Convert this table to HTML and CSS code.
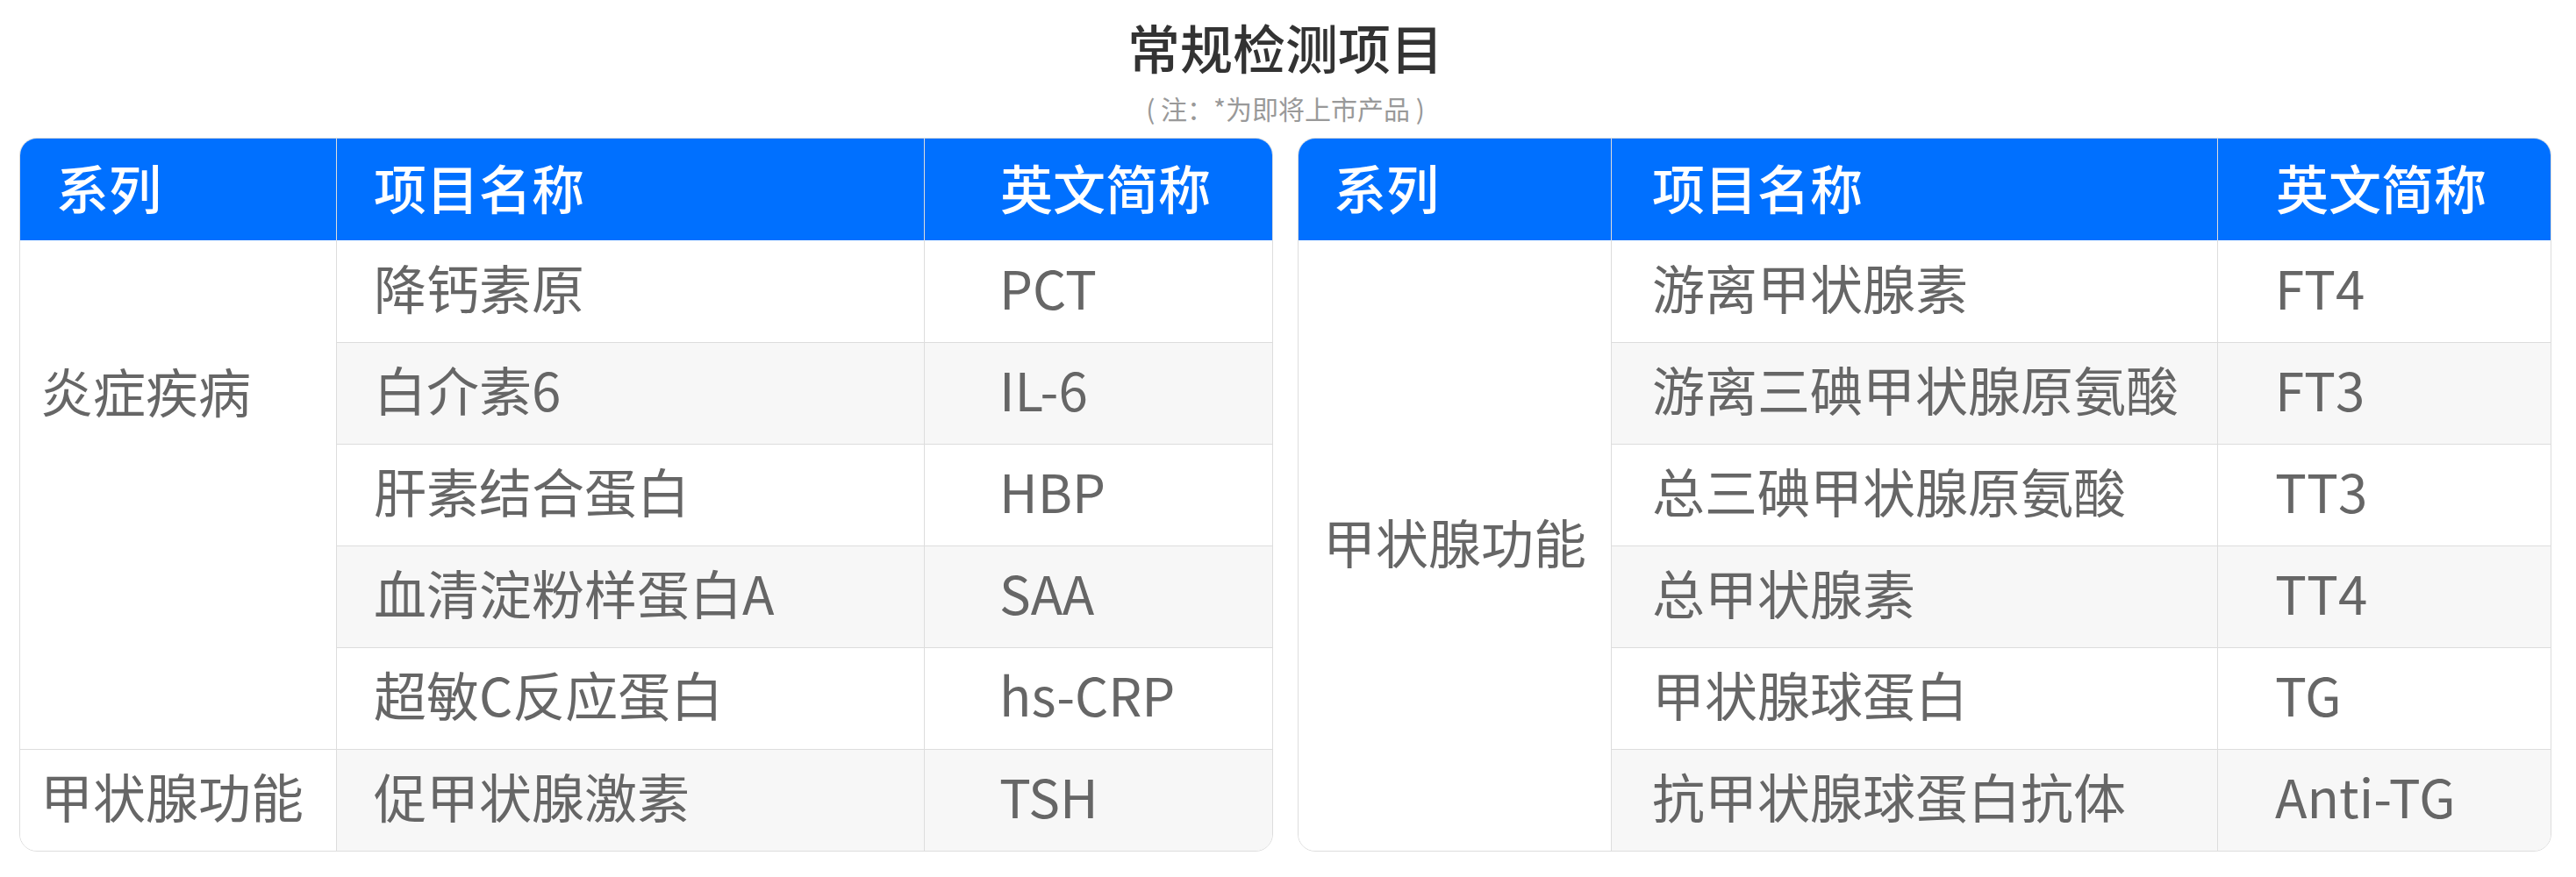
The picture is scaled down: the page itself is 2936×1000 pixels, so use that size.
FILE: index.html
```html
<!DOCTYPE html>
<html lang="zh-CN">
<head>
    <meta charset="UTF-8">
    <meta name="viewport" content="width=device-width, initial-scale=1.0">
    <title>常规检测项目</title>
    <link rel="stylesheet" href="styles.css">
</head>
<body>
    <div class="page">
        <h1 class="title">常规检测项目</h1>
        <p class="note">( 注：*为即将上市产品 )</p>
        <div class="tables">
            <div class="table-box box-a">
                <table>
                    <thead>
                        <tr>
                            <th class="series">系列</th>
                            <th class="name">项目名称</th>
                            <th class="abbr">英文简称</th>
                        </tr>
                    </thead>
                    <tbody>
                        <tr>
                            <td class="series group" rowspan="5">炎症疾病</td>
                            <td class="name">降钙素原</td>
                            <td class="abbr">PCT</td>
                        </tr>
                        <tr class="alt">
                            <td class="name">白介素6</td>
                            <td class="abbr">IL-6</td>
                        </tr>
                        <tr>
                            <td class="name">肝素结合蛋白</td>
                            <td class="abbr">HBP</td>
                        </tr>
                        <tr class="alt">
                            <td class="name">血清淀粉样蛋白A</td>
                            <td class="abbr">SAA</td>
                        </tr>
                        <tr>
                            <td class="name">超敏C反应蛋白</td>
                            <td class="abbr">hs-CRP</td>
                        </tr>
                        <tr class="alt">
                            <td class="series">甲状腺功能</td>
                            <td class="name">促甲状腺激素</td>
                            <td class="abbr">TSH</td>
                        </tr>
                    </tbody>
                </table>
            </div>
            <div class="table-box box-b">
                <table>
                    <thead>
                        <tr>
                            <th class="series">系列</th>
                            <th class="name">项目名称</th>
                            <th class="abbr">英文简称</th>
                        </tr>
                    </thead>
                    <tbody>
                        <tr>
                            <td class="series center" rowspan="6">甲状腺功能</td>
                            <td class="name">游离甲状腺素</td>
                            <td class="abbr">FT4</td>
                        </tr>
                        <tr class="alt">
                            <td class="name">游离三碘甲状腺原氨酸</td>
                            <td class="abbr">FT3</td>
                        </tr>
                        <tr>
                            <td class="name">总三碘甲状腺原氨酸</td>
                            <td class="abbr">TT3</td>
                        </tr>
                        <tr class="alt">
                            <td class="name">总甲状腺素</td>
                            <td class="abbr">TT4</td>
                        </tr>
                        <tr>
                            <td class="name">甲状腺球蛋白</td>
                            <td class="abbr">TG</td>
                        </tr>
                        <tr class="alt">
                            <td class="name">抗甲状腺球蛋白抗体</td>
                            <td class="abbr">Anti-TG</td>
                        </tr>
                    </tbody>
                </table>
            </div>
        </div>
    </div>
</body>
</html>
```

FILE: styles.css
```css
body {
    margin: 0;
    padding: 0;
    background: #fff;
    font-family: "Noto Sans CJK SC", "Noto Sans", sans-serif;
    color: #666;
}
.page {
    padding: 18px 28px 0 22px;
}
.title {
    margin: 0;
    text-align: center;
    font-size: 60px;
    line-height: 70px;
    font-weight: 500;
    color: #333;
}
.note {
    margin: 16px 0 15px;
    text-align: center;
    font-size: 30px;
    line-height: 38px;
    color: #999;
}
.tables {
    display: flex;
    gap: 28px;
}
.table-box {
    flex: 1;
    border: 1px solid #ddd;
    border-radius: 20px;
    overflow: hidden;
}
.table-box table {
    width: 100%;
    border-collapse: collapse;
    table-layout: fixed;
}
.table-box tr {
    height: 116px;
}
.table-box th, .table-box td {
    padding: 0 0 10px;
    font-size: 60px;
    line-height: 1.3;
    text-align: left;
    white-space: nowrap;
    border-left: 1px solid #ddd;
    border-top: 1px solid #ddd;
}
.table-box th:first-child, .table-box td.series {
    border-left: none;
}
.table-box thead th {
    border-top: none;
    background: #0070ff;
    color: #fff;
    font-weight: 500;
    padding-bottom: 6px;
}
.table-box tbody tr:first-child td {
    border-top: none;
}
.table-box tr.alt td {
    background: #f7f7f7;
}
.table-box td.series {
    background: #fff !important;
}
.table-box td.group {
    vertical-align: top;
    padding-top: 132px;
    padding-bottom: 0;
}
.table-box td.center {
    text-align: center;
}

/* left table */
.box-a th.series { width: 319px; padding-left: 41px; }
.box-a th.name { width: 627px; padding-left: 42px; }
.box-a th.abbr { padding-left: 86px; }
.box-a td.series { padding-left: 23px; }
.box-a td.name { padding-left: 42px; }
.box-a td.abbr { padding-left: 85px; }

/* right table */
.box-b th.series { width: 316px; padding-left: 40px; }
.box-b th.name { width: 644px; padding-left: 46px; }
.box-b th.abbr { padding-left: 66px; }
.box-b td.name { padding-left: 46px; }
.box-b td.abbr { padding-left: 65px; }
```
